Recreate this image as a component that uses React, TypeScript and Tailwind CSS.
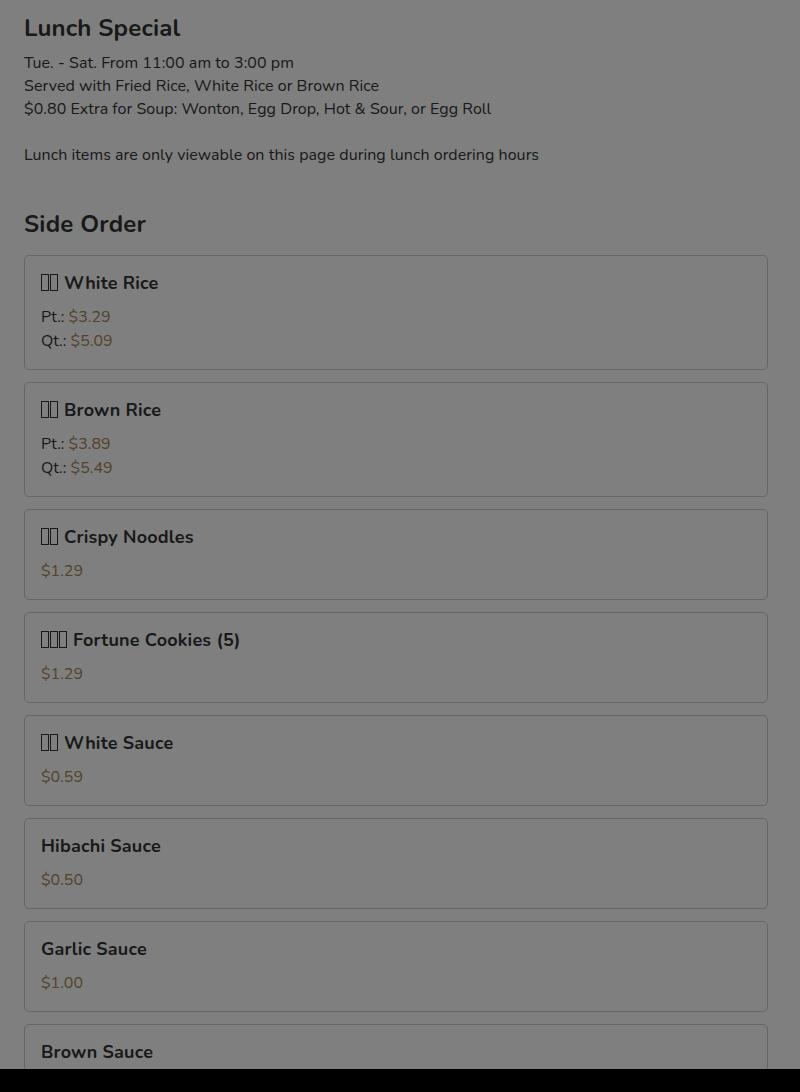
import React from 'react';

interface SideItem {
  tofu: number;
  name: string;
  prices: { label?: string; value: string }[];
}

const items: SideItem[] = [
  { tofu: 2, name: 'White Rice', prices: [{ label: 'Pt.:', value: '$3.29' }, { label: 'Qt.:', value: '$5.09' }] },
  { tofu: 2, name: 'Brown Rice', prices: [{ label: 'Pt.:', value: '$3.89' }, { label: 'Qt.:', value: '$5.49' }] },
  { tofu: 2, name: 'Crispy Noodles', prices: [{ value: '$1.29' }] },
  { tofu: 3, name: 'Fortune Cookies (5)', prices: [{ value: '$1.29' }] },
  { tofu: 2, name: 'White Sauce', prices: [{ value: '$0.59' }] },
  { tofu: 0, name: 'Hibachi Sauce', prices: [{ value: '$0.50' }] },
  { tofu: 0, name: 'Garlic Sauce', prices: [{ value: '$1.00' }] },
  { tofu: 0, name: 'Brown Sauce', prices: [{ value: '$0.50' }] },
];

// missing-glyph boxes, as the source renders them
function Tofu({ count }: { count: number }) {
  if (!count) return null;
  return (
    <span className="inline-flex mr-[5px] align-[-2px]">
      {Array.from({ length: count }).map((_, i) => (
        <span key={i} className="inline-block w-[8px] h-[17px] border border-[#333] mr-[1px]" />
      ))}
    </span>
  );
}

export default function App() {
  return (
    <div className="min-h-screen bg-white text-[#333] font-['Nunito','Lato','Noto_Sans',sans-serif]">
      <div className="pl-6 pr-8 pt-[12px] pb-10">
        <h2 className="text-[24px] leading-[32px] font-bold mb-[8px] tracking-[0.2px]">Lunch Special</h2>
        <div className="text-[16px] leading-[23px] tracking-[0.05px]">
          <p>Tue. - Sat. From 11:00 am to 3:00 pm</p>
          <p>Served with Fried Rice, White Rice or Brown Rice</p>
          <p>$0.80 Extra for Soup: Wonton, Egg Drop, Hot &amp; Sour, or Egg Roll</p>
          <p className="mt-[23px]">Lunch items are only viewable on this page during lunch ordering hours</p>
        </div>

        <h2 className="text-[24px] leading-[32px] font-bold mt-[41px] mb-[15px] tracking-[0.2px]">Side Order</h2>
        <div className="flex flex-col gap-3">
          {items.map(item => (
            <div key={item.name} className="border border-[#ccc] rounded-[5px] px-4 pt-4 pb-4">
              <h3 className="text-[18px] leading-[22px] font-bold mb-[11px] tracking-[0.2px]">
                <Tofu count={item.tofu} />
                {item.name}
              </h3>
              {item.prices.map((p, i) => (
                <div key={i} className="text-[16px] leading-[24px]">
                  {p.label && <span>{p.label} </span>}
                  <span className="text-[#a8844f]">{p.value}</span>
                </div>
              ))}
            </div>
          ))}
        </div>
      </div>

      {/* dimmed backdrop */}
      <div className="fixed inset-0 bg-black/50" />
      <div className="fixed left-0 right-0 bottom-0 h-[23px] bg-black" />
    </div>
  );
}
